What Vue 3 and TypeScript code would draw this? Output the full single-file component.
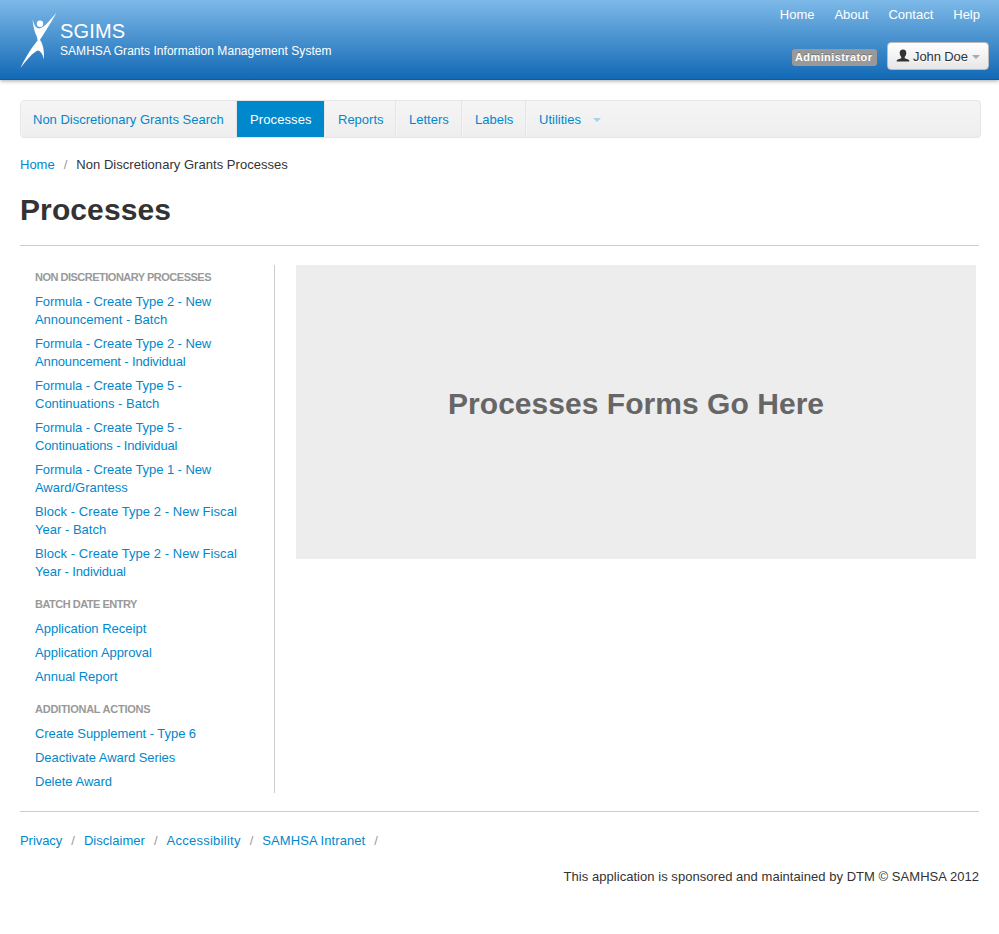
<script setup lang="ts">
interface NavItem {
  label: string
  cls: string
  active?: boolean
  dropdown?: boolean
}

interface SideLink {
  text: string
  cls: string
}

interface SideGroup {
  title: string
  cls: string
  links: SideLink[]
}

const topLinks: string[] = ['Home', 'About', 'Contact', 'Help']

const navItems: NavItem[] = [
  { label: 'Non Discretionary Grants Search', cls: 'search' },
  { label: 'Processes', cls: 'processes', active: true },
  { label: 'Reports', cls: 'reports' },
  { label: 'Letters', cls: 'letters' },
  { label: 'Labels', cls: 'labels' },
  { label: 'Utilities', cls: 'utilities', dropdown: true },
]

const groups: SideGroup[] = [
  {
    title: 'Non Discretionary Processes',
    cls: 'tight',
    links: [
      { text: 'Formula - Create Type 2 - New Announcement - Batch', cls: 'formula' },
      { text: 'Formula - Create Type 2 - New Announcement - Individual', cls: 'formula individual' },
      { text: 'Formula - Create Type 5 - Continuations - Batch', cls: 'formula' },
      { text: 'Formula - Create Type 5 - Continuations - Individual', cls: 'formula individual' },
      { text: 'Formula - Create Type 1 - New Award/Grantess', cls: 'formula' },
      { text: 'Block - Create Type 2 - New Fiscal Year - Batch', cls: 'block' },
      { text: 'Block - Create Type 2 - New Fiscal Year - Individual', cls: 'block individual' },
    ],
  },
  {
    title: 'Batch Date Entry',
    cls: 'tight',
    links: [
      { text: 'Application Receipt', cls: 'plain' },
      { text: 'Application Approval', cls: 'single' },
      { text: 'Annual Report', cls: 'single' },
    ],
  },
  {
    title: 'Additional Actions',
    cls: 'snug',
    links: [
      { text: 'Create Supplement - Type 6', cls: 'single' },
      { text: 'Deactivate Award Series', cls: 'single' },
      { text: 'Delete Award', cls: 'plain' },
    ],
  },
]

const footerLinks: SideLink[] = [
  { text: 'Privacy', cls: 'privacy' },
  { text: 'Disclaimer', cls: 'disclaimer' },
  { text: 'Accessibility', cls: 'accessibility' },
  { text: 'SAMHSA Intranet', cls: 'intranet' },
]
</script>

<template>
  <div class="page">
    <header class="banner">
      <div class="brand">
        <svg class="logo" width="38" height="58" viewBox="0 0 38 58" aria-hidden="true">
          <path
            d="M36.700 .5C33.500 6 29 14 24 21.500C22 25 20.300 27 20 28C22.500 31 24.500 38 24 47.500C23 42.500 20.500 38.800 17.800 38.500C13 40 6 49 .5 56C5 46 11.500 36 17.500 28.500C17.500 24.500 15 21.500 14 16.500C13.300 13 12.600 10 12.700 7.300C13.500 11 15 15.500 18 16.300C23 17.500 29 9 36.700 .5Z"
          />
          <circle cx="20" cy="11.700" r="3.200" />
        </svg>
        <div class="brand-text">
          <div class="brand-name">SGIMS</div>
          <div class="brand-sub">SAMHSA Grants Information Management System</div>
        </div>
      </div>
      <div class="account">
        <nav class="top-links">
          <a v-for="link in topLinks" :key="link" href="#">{{ link }}</a>
        </nav>
        <div class="user-row">
          <span class="role">Administrator</span>
          <button class="user-button" type="button">
            <svg width="14" height="14" viewBox="0 0 14 14" aria-hidden="true">
              <path
                d="M7 .5C9.300 .5 10.300 2 10.300 4C10.300 6 9.300 7.300 8.700 8V9.200L12.200 10.500C13.300 11 13.300 11.500 13.300 12.500H.7C.7 11.500 .7 11 1.800 10.500L5.300 9.200V8C4.700 7.300 3.700 6 3.700 4C3.700 2 4.700 .5 7 .5Z"
              />
            </svg>
            <span class="user-name">John Doe</span>
            <span class="caret"></span>
          </button>
        </div>
      </div>
    </header>

    <main class="content">
      <nav class="subnav">
        <a
          v-for="item in navItems"
          :key="item.label"
          href="#"
          :class="[item.cls, { active: item.active, dropdown: item.dropdown }]"
        >
          {{ item.label }}<span v-if="item.dropdown" class="caret"></span>
        </a>
      </nav>

      <div class="breadcrumb">
        <a href="#">Home</a><span class="divider">/</span><span class="current">Non Discretionary Grants Processes</span>
      </div>

      <h1>Processes</h1>

      <div class="columns">
        <aside>
          <section v-for="group in groups" :key="group.title">
            <h2 :class="group.cls">{{ group.title }}</h2>
            <a v-for="link in group.links" :key="link.text" href="#" :class="link.cls">{{ link.text }}</a>
          </section>
        </aside>
        <div class="placeholder">Processes Forms Go Here</div>
      </div>

      <footer>
        <div class="footer-links">
          <template v-for="link in footerLinks" :key="link.text">
            <a href="#" :class="link.cls">{{ link.text }}</a><span class="divider">/</span>
          </template>
        </div>
        <p>This application is sponsored and maintained by DTM © SAMHSA 2012</p>
      </footer>
    </main>
  </div>
</template>

<style>
body {
  margin: 0;
  background: #fff;
}
</style>

<style scoped>
.page {
  min-height: 934px;
  font: 13px/18px 'Liberation Sans', Arial, sans-serif;
  color: #333;
}
a {
  color: #08c;
  text-decoration: none;
}
.banner {
  display: flex;
  justify-content: space-between;
  box-sizing: border-box;
  height: 80px;
  padding: 0 10px 0 20px;
  background: linear-gradient(#7db9e8, #1269b5);
  border-bottom: 1px solid #0d5ca1;
  box-shadow: 0 1px 4px rgba(0, 0, 0, 0.35);
  color: #fff;
}
.brand {
  display: flex;
}
.logo {
  margin-top: 12px;
  fill: #fff;
}
.brand-text {
  padding: 21px 0 0 2px;
  white-space: nowrap;
}
.brand-name {
  font-size: 20px;
  line-height: 20px;
  letter-spacing: 0.15px;
}
.brand-sub {
  font-size: 12px;
  line-height: 20px;
  letter-spacing: 0.05px;
}
.account {
  display: flex;
  flex-direction: column;
  align-items: flex-end;
}
.top-links {
  display: flex;
  gap: 20px;
  padding: 6px 9px 0 0;
}
.top-links a {
  color: #fff;
}
.user-row {
  display: flex;
  align-items: center;
  gap: 10px;
  margin-top: 18px;
}
.role {
  box-sizing: border-box;
  width: 85px;
  height: 17px;
  margin-top: 3px;
  padding-left: 3px;
  border-radius: 3px;
  background: #999;
  font-size: 11px;
  line-height: 17px;
  font-weight: bold;
  letter-spacing: 0.4px;
  text-shadow: 0 -1px 0 rgba(0, 0, 0, 0.25);
}
.user-button {
  display: flex;
  align-items: center;
  box-sizing: border-box;
  width: 102px;
  height: 28px;
  padding: 1px 0 0 8px;
  border: 1px solid #bbb;
  border-radius: 4px;
  background: linear-gradient(#fff, #e6e6e6);
  font: inherit;
  color: #333;
  text-shadow: 0 1px 1px rgba(255, 255, 255, 0.75);
}
.user-button svg {
  margin: -2px 0 0 0;
  fill: #333;
}
.user-name {
  margin-left: 3px;
  letter-spacing: -0.1px;
  line-height: 18px;
  padding-top: 1px;
  white-space: nowrap;
}
.caret {
  display: inline-block;
  border-top: 4px solid #000;
  border-right: 4px solid transparent;
  border-left: 4px solid transparent;
  opacity: 0.3;
}
.user-button .caret {
  margin-left: 4px;
}
.content {
  padding: 20px 20px 0;
}
.subnav {
  display: flex;
  box-sizing: border-box;
  width: 961px;
  height: 38px;
  border: 1px solid #e5e5e5;
  border-radius: 4px;
  background: linear-gradient(#f5f5f5, #eee);
}
.subnav a {
  box-sizing: border-box;
  height: 36px;
  padding: 10px 0 0 12px;
  border-right: 1px solid #e5e5e5;
  border-left: 1px solid #f5f5f5;
  white-space: nowrap;
}
.subnav .search {
  width: 216px;
  padding-left: 11px;
}
.subnav .processes {
  width: 88px;
  letter-spacing: 0.1px;
}
.subnav .reports {
  width: 71px;
}
.subnav .letters {
  width: 66px;
}
.subnav .labels {
  width: 64px;
}
.subnav .dropdown {
  border-right: 0;
}
.subnav .active {
  border-left-color: #08c;
  background: #08c padding-box;
  color: #fff;
}
.subnav .caret {
  margin: 0 0 2px 12px;
  border-top-color: #08c;
}
.breadcrumb {
  margin-top: 18px;
}
.current {
  letter-spacing: 0.04px;
}
.divider {
  margin: 0 9px;
  color: #999;
}
h1 {
  margin: 18px 0 0;
  padding-bottom: 17px;
  border-bottom: 1px solid #ccc;
  font-size: 30px;
  line-height: 36px;
  letter-spacing: 0.1px;
}
.columns {
  display: flex;
  gap: 21px;
  margin-top: 19px;
}
aside {
  box-sizing: border-box;
  width: 255px;
  height: 528px;
  padding: 3px 30px 0 15px;
  border-right: 1px solid #ccc;
}
section {
  margin-bottom: 14px;
}
aside a {
  display: block;
  margin-bottom: 6px;
}
.formula::first-line {
  letter-spacing: -0.07px;
}
.block::first-line {
  letter-spacing: 0.06px;
}
.individual {
  letter-spacing: -0.14px;
}
.single {
  letter-spacing: -0.05px;
}
h2 {
  margin: 0 0 7px;
  color: #999;
  font-size: 11px;
  line-height: 18px;
  text-transform: uppercase;
  white-space: nowrap;
}
.tight {
  letter-spacing: -0.5px;
}
.snug {
  letter-spacing: -0.25px;
}
.placeholder {
  box-sizing: border-box;
  width: 680px;
  height: 294px;
  padding: 121px 0 0 152px;
  background: #ededed;
  color: #666;
  font-size: 30px;
  line-height: 36px;
  font-weight: bold;
  letter-spacing: 0.04px;
}
footer {
  margin-top: 18px;
  padding-top: 20px;
  border-top: 1px solid #ccc;
}
.footer-links {
  display: flex;
}
.privacy {
  letter-spacing: -0.05px;
}
.disclaimer {
  letter-spacing: 0.03px;
}
.accessibility {
  letter-spacing: 0.26px;
}
.intranet {
  letter-spacing: 0.07px;
}
footer p {
  margin: 18px 0 0;
  text-align: right;
  letter-spacing: 0.04px;
}
</style>
